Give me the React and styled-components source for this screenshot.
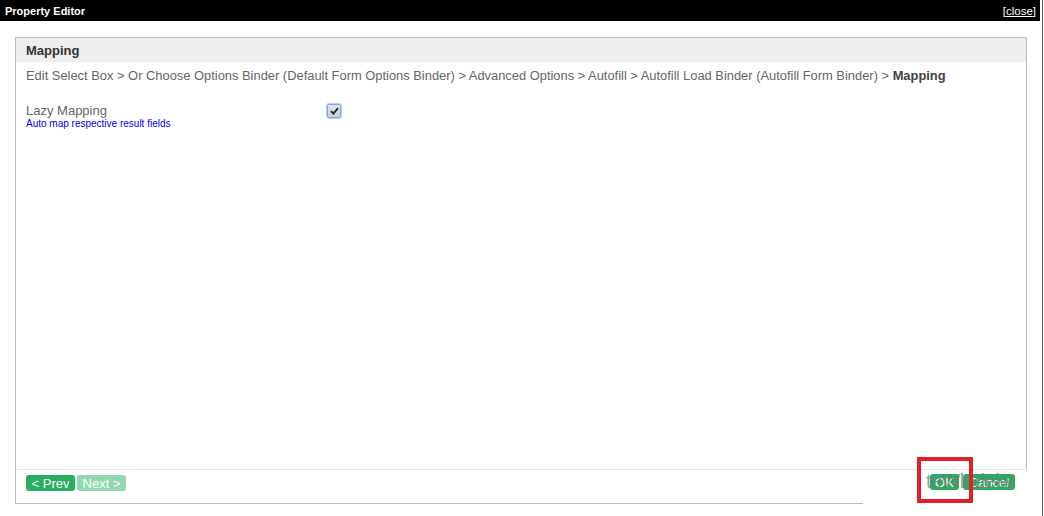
import React from "react";
import styled, { createGlobalStyle } from "styled-components";

const Global = createGlobalStyle`
  html, body { margin: 0; padding: 0; background: #fff; }
  body { font-family: Arial, "Liberation Sans", sans-serif; }
`;

const Page = styled.div`
  display: flex;
  width: 1044px;
  height: 516px;
  background: #fff;
  overflow: hidden;
`;

const Dialog = styled.div`
  width: 1042px;
  display: flex;
  flex-direction: column;
`;

const EdgeLine = styled.div`
  width: 1px;
  background: #666;
`;

const TitleBar = styled.div`
  width: 1040px;
  height: 21px;
  background: #000;
  color: #fff;
  display: flex;
  align-items: center;
  justify-content: space-between;
  padding: 0 4px 0 5px;
  box-sizing: border-box;
  font-size: 11px;
`;

const Title = styled.span`
  font-weight: bold;
`;

const Close = styled.span`
  font-size: 11.5px;
  u { text-decoration: underline; }
`;

const Body = styled.div`
  padding: 16px 0 0 15px;
`;

const Panel = styled.div`
  position: relative;
  width: 1012px;
  height: 467px;
  box-sizing: border-box;
  border: 1px solid #bbb;
  display: flex;
  flex-direction: column;
`;

const Header = styled.div`
  height: 24px;
  background: #eee;
  display: flex;
  align-items: center;
  padding-left: 10px;
  font-size: 13px;
  font-weight: bold;
  color: #333;
`;

const Crumbs = styled.div`
  padding: 6px 10px 0;
  font-size: 12.9px;
  color: #666;
  line-height: 15px;
  white-space: nowrap;
  b { color: #444; }
`;

const Content = styled.div`
  flex: 1;
  padding: 20px 10px 0;
`;

const Row = styled.div`
  display: flex;
  align-items: flex-start;
`;

const LabelCol = styled.div`
  width: 301px;
  display: flex;
  flex-direction: column;
`;

const Label = styled.span`
  font-size: 13px;
  color: #666;
  line-height: 15px;
`;

const Hint = styled.span`
  font-size: 10px;
  color: #00f;
  line-height: 12px;
`;

const Check = styled.span`
  margin-top: 1px;
  width: 14px;
  height: 14px;
  box-sizing: border-box;
  border: 1px solid #7aa6ee;
  border-radius: 2px;
  box-shadow: 0 0 0 1px #b9d0f6;
  background: linear-gradient(#e6e6e6, #cdcdcd);
  display: flex;
  align-items: center;
  justify-content: center;
`;

const Footer = styled.div`
  height: 34px;
  border-top: 1px solid #e6e6e6;
  display: flex;
  align-items: flex-start;
  gap: 2px;
  padding: 5px 0 0 10px;
  box-sizing: border-box;
`;

const Btn = styled.span`
  display: inline-flex;
  align-items: center;
  justify-content: center;
  height: 16px;
  width: ${(p) => p.$w}px;
  border-radius: 3px;
  background: ${(p) => (p.$disabled ? "#93d7ae" : "#27ae60")};
  color: #fff;
  font-size: 13px;
`;

const RightActions = styled.div`
  position: absolute;
  right: -5px;
  bottom: -2px;
  width: 168px;
  height: 35px;
  background: #fff;
  display: flex;
  align-items: flex-start;
  justify-content: flex-end;
  gap: 4px;
  padding: 4px 16px 0 0;
  box-sizing: border-box;
`;

const Ghost = styled.span`
  position: absolute;
  left: 63px;
  top: 0px;
  font-size: 20px;
  color: rgba(120, 120, 120, 0.75);
  letter-spacing: -0.6px;
  pointer-events: none;
  white-space: nowrap;
`;

const Highlight = styled.div`
  position: absolute;
  left: 901px;
  top: 419px;
  width: 56px;
  height: 46px;
  box-sizing: border-box;
  border: 4px solid #e41e26;
`;

export default function App() {
  return (
    <>
      <Global />
      <Page>
        <Dialog>
          <TitleBar>
            <Title>Property Editor</Title>
            <Close>
              [<u>close</u>]
            </Close>
          </TitleBar>
          <Body>
            <Panel>
              <Header>Mapping</Header>
              <Crumbs>
                Edit Select Box &gt; Or Choose Options Binder (Default Form Options Binder) &gt; Advanced Options &gt; Autofill &gt; Autofill Load Binder (Autofill Form Binder) &gt; <b>Mapping</b>
              </Crumbs>
              <Content>
                <Row>
                  <LabelCol>
                    <Label>Lazy Mapping</Label>
                    <Hint>Auto map respective result fields</Hint>
                  </LabelCol>
                  <Check>
                    <svg width="9" height="8" viewBox="0 0 9 8">
                      <path d="M1 4.2 L3.4 6.6 L8 1.2" fill="none" stroke="#222" strokeWidth="1.8" />
                    </svg>
                  </Check>
                </Row>
              </Content>
              <Footer>
                <Btn $w={49}>&lt; Prev</Btn>
                <Btn $w={49} $disabled>Next &gt;</Btn>
              </Footer>
              <RightActions>
                <Btn $w={29}>OK</Btn>
                <Btn $w={52}>Cancel</Btn>
                <Ghost>teWladelw</Ghost>
              </RightActions>
              <Highlight />
            </Panel>
          </Body>
        </Dialog>
        <EdgeLine />
      </Page>
    </>
  );
}
